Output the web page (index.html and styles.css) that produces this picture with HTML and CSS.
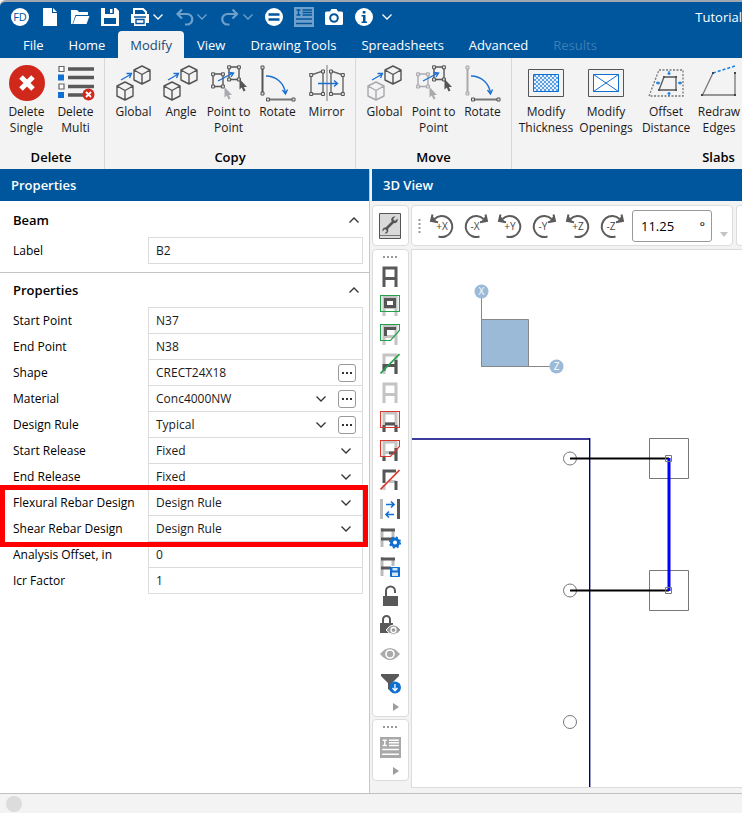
FILE: index.html
```html
<!DOCTYPE html>
<html lang="en">
<head>
<meta charset="utf-8">
<title>Tutorial</title>
<link rel="stylesheet" href="styles.css">
</head>
<body>
<svg class="defs" width="0" height="0" aria-hidden="true">
  <defs>
    <symbol id="chev" viewBox="0 0 12 12"><path d="M1.500 3.500 6 8l4.500-4.500" fill="none" stroke="currentColor" stroke-width="1.300"/></symbol>
    <symbol id="cube" viewBox="0 0 18 20"><path d="M9 1 1 5v10l8 4 8-4V5zM1 5l8 4.500L17 5M9 9.500V19" fill="none" stroke="currentColor" stroke-width="1.400" stroke-linejoin="round"/></symbol>
    <symbol id="arrow" viewBox="0 0 13 9"><path d="M1 8 10.500 2.500M6.500 1.500h5l-2 4.500" fill="none" stroke="#1a6fd0" stroke-width="1.300"/></symbol>
    <symbol id="quad" viewBox="0 0 14 17"><path d="M2 2h10v12.500H2z" fill="none" stroke="currentColor" stroke-width="1.400"/><path d="M.6.8h3v3h-3zM10.400.8h3v3h-3zM.6 13h3v3h-3zM10.400 13h3v3h-3z" fill="#ddd" stroke="currentColor"/></symbol>
    <symbol id="cursor" viewBox="0 0 8 13"><path d="M.5 0v10.500l2.300-2 1.700 4 2-1-1.700-3.500H8z" fill="currentColor"/></symbol>
    <symbol id="rotate" viewBox="0 0 36 38">
      <path d="M6 11c10 0 18 7 19.500 17M22.500 25l3 4 2-4.500" fill="none" stroke="#1a6fd0" stroke-width="1.400"/>
      <path d="M8.500 34.500h25" stroke="#777" stroke-width="2"/><path d="M6.500 33h3v3h-3zM32 33h3v3h-3z" fill="#ddd" stroke="#555"/>
      <path d="M2.500 2v26" stroke="currentColor" stroke-width="2"/><path d="M1 1h3v3H1zM1 27h3v3H1z" fill="#ddd" stroke="currentColor"/>
    </symbol>
    <symbol id="spin" viewBox="0 0 26 26">
      <path d="M5.500 6A10.500 10.500 0 1 1 9.500 23.500" fill="none" stroke="#5c5c5c" stroke-width="2"/><path d="M3.500 1.500 2 8l7 1.300" fill="none" stroke="#5c5c5c" stroke-width="2"/><path d="M2.800 2 2 8l6 1z" fill="#5c5c5c"/>
    </symbol>
    <symbol id="frame" viewBox="0 0 20 22"><path d="M4 21V2h12v19M4 12.500h12" fill="none" stroke="currentColor" stroke-width="3"/></symbol>
    <symbol id="form" viewBox="0 0 20 20"><path d="M0 0h20v20H0z" fill="currentColor"/><path d="M2.500 3h4M2.500 8h4M4.500 3v5M8.500 3H18M8.500 5.500H18M8.500 8H18M2 12h16M2 16.500h16" stroke="var(--ink)" stroke-width="1.400"/></symbol>
  </defs>
</svg>

<header class="top">
  <div class="quick">
    <button class="q" aria-label="Application"><svg width="20" height="20"><circle cx="10" cy="10" r="9" fill="#fff"/><text x="10" y="14" text-anchor="middle" class="logo">FD</text></svg></button>
    <button class="q" aria-label="New"><svg width="20" height="20"><path d="M3 1h9v5h5v13H3zM13 1l4 4h-4z" fill="#fff"/></svg></button>
    <button class="q" aria-label="Open"><svg width="20" height="20"><path d="M1 17V3h6l2 2h9v3H5.500L2.500 17z" fill="#fff"/><path d="M6 9h13.500l-3 8H3z" fill="#fff"/></svg></button>
    <button class="q" aria-label="Save"><svg width="20" height="20"><path d="M1 1h15l3 3v15H1z" fill="#fff"/><path d="M5 1h9v6H5zM4 11h12v6H4z" fill="#00569d"/><path d="M10 2h2.500v4H10z" fill="#fff"/></svg></button>
    <button class="q near" aria-label="Print"><svg width="20" height="20"><path d="M4 8V2h9l3 3v3" fill="none" stroke="#fff" stroke-width="2"/><path d="M1 7h18v9h-3v3H4v-3H1z" fill="#fff"/><path d="M4 10h12M6 12.500h8v4H6z" stroke="#00569d" stroke-width="1.400" fill="none"/></svg></button>
    <button class="c" aria-label="Print options"><svg width="12" height="12"><use href="#chev"/></svg></button>
    <button class="q dim near" aria-label="Undo"><svg width="20" height="20"><path d="M8 2.500 3.500 7 8 11.500M4 7h9a4.800 4.800 0 0 1 0 10.500h-2" fill="none" stroke="currentColor" stroke-width="2.200"/></svg></button>
    <button class="c dim wide" aria-label="Undo list"><svg width="12" height="12"><use href="#chev"/></svg></button>
    <button class="q dim near" aria-label="Redo"><svg width="20" height="20"><path d="M12.500 2.500 17 7 12.500 11.500M16.500 7h-9a4.800 4.800 0 0 0 0 10.500h2" fill="none" stroke="currentColor" stroke-width="2.200"/></svg></button>
    <button class="c dim" aria-label="Redo list"><svg width="12" height="12"><use href="#chev"/></svg></button>
    <button class="q" aria-label="Solve"><svg width="20" height="20"><circle cx="10" cy="10" r="9" fill="#fff"/><path d="M4.500 7.500h11M4.500 12.500h11" stroke="#00569d" stroke-width="2.400"/></svg></button>
    <button class="q dim" aria-label="Tables"><svg width="20" height="20"><use href="#form"/></svg></button>
    <button class="q" aria-label="Screenshot"><svg width="20" height="20"><path d="M1 6q0-1.500 1.500-1.500H6L7.500 2h5L14 4.500h3.500Q19 4.500 19 6v10.500q0 1.500-1.500 1.500h-15Q1 18 1 16.500z" fill="#fff"/><circle cx="10" cy="11" r="3.800" fill="none" stroke="#00569d" stroke-width="2"/></svg></button>
    <button class="q info" aria-label="Information"><svg width="20" height="20"><circle cx="10" cy="10" r="9" fill="#fff"/><path d="M8.700 4h2.800v2.500H8.700zM7.500 8h4v6.500H13V16H7.500v-1.500H9v-5H7.500z" fill="#00569d"/></svg></button>
    <button class="c" aria-label="Customize"><svg width="12" height="12"><use href="#chev"/></svg></button>
    <span class="doc">Tutorial</span>
  </div>
  <nav class="tabs">
    <a href="#">File</a><a href="#">Home</a><a href="#" class="on" aria-current="page">Modify</a><a href="#">View</a><a href="#">Drawing Tools</a><a href="#">Spreadsheets</a><a href="#">Advanced</a><a href="#" class="off">Results</a>
  </nav>
</header>

<section class="ribbon" aria-label="Modify tools">
  <div class="group">
    <div class="tools">
      <button class="tool m"><svg width="36" height="38"><circle cx="18" cy="18" r="18" fill="#d1281c"/><path d="m12 12 12 12M24 12 12 24" stroke="#fff" stroke-width="5"/></svg>Delete<br>Single</button>
      <button class="tool m"><svg width="38" height="38"><path d="M11 4h26M11 12.500h26M11 21.500h26M11 30h18" stroke="#595959" stroke-width="3.500"/><path d="M2 1.500h5v5H2zM2 19h5v5H2z" fill="#fff" stroke="#666" stroke-width="1.200"/><path d="M1 9.500h6v6H1zM1 27h6v6H1z" fill="#0f6fd0"/><circle cx="31.500" cy="29.500" r="6" fill="#d1281c"/><path d="m29 27 5 5M34 27l-5 5" stroke="#fff" stroke-width="1.800"/></svg>Delete<br>Multi</button>
    </div>
    <h2>Delete</h2>
  </div>
  <div class="group">
    <div class="tools">
      <button class="tool m"><svg width="36" height="38"><use href="#cube" x="0" y="16" width="18" height="20"/><use href="#cube" x="17" y="0" width="18" height="20"/><use href="#arrow" x="4" y="7" width="13" height="9"/></svg>Global</button>
      <button class="tool s"><svg width="36" height="38"><use href="#cube" x="0" y="16" width="18" height="20"/><use href="#cube" x="17" y="0" width="18" height="20"/><use href="#arrow" x="4" y="7" width="13" height="9"/></svg>Angle</button>
      <button class="tool m"><svg width="36" height="38"><use href="#quad" x="0" y="7" width="14" height="17"/><use href="#quad" x="16" y="0" width="14" height="17"/><use href="#cursor" x="13" y="22" width="8" height="13" class="pale"/><use href="#cursor" x="28" y="14" width="8" height="13"/><path d="M7 16 22 8M17.500 7.500 22.500 8 20 12" fill="none" stroke="#1a6fd0" stroke-width="1.400"/></svg>Point to<br>Point</button>
      <button class="tool m"><svg width="36" height="38"><use href="#rotate"/></svg>Rotate</button>
      <button class="tool m"><svg width="36" height="38"><path d="M18 0v36" stroke="#b5b5ba" stroke-width="2"/><path d="M2 10 14 6v23H2zM34 10 22 6v23h12z" fill="none" stroke="#666" stroke-width="1.400"/><path d="M.7 8.500h3v3h-3zM12.500 5h3v3h-3zM.7 27.500h3v3h-3zM12.500 27.500h3v3h-3zM32.300 8.500h3v3h-3zM20.500 5h3v3h-3zM20.500 27.500h3v3h-3zM32.300 27.500h3v3h-3z" fill="#ddd" stroke="#555"/><path d="M9 18.500h19M25 15.500l3.500 3-3.500 3" fill="none" stroke="#1a6fd0" stroke-width="1.400"/></svg>Mirror</button>
    </div>
    <h2>Copy</h2>
  </div>
  <div class="group">
    <div class="tools">
      <button class="tool m"><svg width="36" height="38"><use href="#cube" x="0" y="16" width="18" height="20" class="pale"/><use href="#cube" x="17" y="0" width="18" height="20"/><use href="#arrow" x="4" y="7" width="13" height="9"/></svg>Global</button>
      <button class="tool m"><svg width="36" height="38"><use href="#quad" x="0" y="7" width="14" height="17" class="pale"/><use href="#quad" x="16" y="0" width="14" height="17"/><use href="#cursor" x="13" y="22" width="8" height="13" class="pale"/><use href="#cursor" x="28" y="14" width="8" height="13"/><path d="M7 16 22 8M17.500 7.500 22.500 8 20 12" fill="none" stroke="#1a6fd0" stroke-width="1.400"/></svg>Point to<br>Point</button>
      <button class="tool m"><svg width="36" height="38" class="pale"><use href="#rotate"/></svg>Rotate</button>
    </div>
    <h2>Move</h2>
  </div>
  <div class="group slabs">
    <div class="tools">
      <button class="tool l"><svg width="36" height="38"><defs><pattern id="chk" width="4" height="4" patternUnits="userSpaceOnUse"><path d="M0 0h4v4H0z" fill="#e6f0fb"/><path d="M0 0h2v2H0zM2 2h2v2H2z" fill="#5ba0e4"/></pattern></defs><path d="M.5 4.500h35v27H.5z" fill="none" stroke="#555"/><path d="M5.500 9.500h25v17h-25z" fill="url(#chk)" stroke="#0f6fd0"/></svg>Modify<br>Thickness</button>
      <button class="tool l"><svg width="36" height="38"><path d="M.5 4.500h35v27H.5z" fill="none" stroke="#555"/><path d="M5.500 9.500h25v17h-25zl25 17M30.500 9.500l-25 17" fill="#fff" stroke="#0f6fd0"/></svg>Modify<br>Openings</button>
      <button class="tool l"><svg width="36" height="38"><path d="M11 5h24v26H1z" fill="none" stroke="#777" stroke-width="1.300" stroke-dasharray="2 1.500"/><path d="M16 12h12v13H11z" fill="none" stroke="#555" stroke-width="1.300"/><path d="M15 11h2v2h-2zM27 11h2v2h-2zM10 24h2v2h-2zM27 24h2v2h-2z" fill="#555"/><path d="M21 6v4M21 27v4M8 18h4M30 18h4M19.500 8.500h3M19.500 28.500h3M10 16.500v3M32 16.500v3" stroke="#1a7fe0" stroke-width="1.300"/></svg>Offset<br>Distance</button>
      <button class="tool s"><svg width="36" height="38"><path d="M12 8 1.500 30H34V8" fill="none" stroke="#777" stroke-width="1.300"/><path d="M12 8 34 1" stroke="#1a7fe0" stroke-width="1.500" stroke-dasharray="3 2"/><path d="M11 7h2v2h-2zM0 29h2v2H0zM33 29h2v2h-2zM33 7h2v2h-2z" fill="#444"/></svg>Redraw<br>Edges</button>
    </div>
    <h2>Slabs</h2>
  </div>
</section>

<main class="work">
  <aside class="props">
    <h2 class="bar">Properties</h2>
    <div class="blocks">
    <section class="block">
      <h3>Beam<button class="fold" aria-label="Collapse Beam"><svg width="12" height="12"><use href="#chev"/></svg></button></h3>
      <div class="row"><label for="lb">Label</label><div class="cell"><input id="lb" value="B2"></div></div>
    </section>
    <section class="block">
      <h3>Properties<button class="fold" aria-label="Collapse Properties"><svg width="12" height="12"><use href="#chev"/></svg></button></h3>
      <div class="row"><label for="sp">Start Point</label><div class="cell"><input id="sp" value="N37"></div></div>
      <div class="row"><label for="ep">End Point</label><div class="cell"><input id="ep" value="N38"></div></div>
      <div class="row"><label for="sh">Shape</label><div class="cell"><input id="sh" value="CRECT24X18"><button class="more" aria-label="Browse shapes"><i></i><i></i><i></i></button></div></div>
      <div class="row"><label for="ma">Material</label><div class="cell"><select id="ma"><option>Conc4000NW</option></select><svg class="drop" width="12" height="12"><use href="#chev"/></svg><button class="more" aria-label="Browse materials"><i></i><i></i><i></i></button></div></div>
      <div class="row"><label for="dr">Design Rule</label><div class="cell"><select id="dr"><option>Typical</option></select><svg class="drop" width="12" height="12"><use href="#chev"/></svg><button class="more" aria-label="Browse design rules"><i></i><i></i><i></i></button></div></div>
      <div class="row"><label for="sr">Start Release</label><div class="cell"><select id="sr"><option>Fixed</option></select><svg class="drop" width="12" height="12"><use href="#chev"/></svg></div></div>
      <div class="row"><label for="er">End Release</label><div class="cell"><select id="er"><option>Fixed</option></select><svg class="drop" width="12" height="12"><use href="#chev"/></svg></div></div>
      <div class="marked">
        <div class="row"><label for="fr">Flexural Rebar Design</label><div class="cell"><select id="fr"><option>Design Rule</option></select><svg class="drop" width="12" height="12"><use href="#chev"/></svg></div></div>
        <div class="row"><label for="sd">Shear Rebar Design</label><div class="cell"><select id="sd"><option>Design Rule</option></select><svg class="drop" width="12" height="12"><use href="#chev"/></svg></div></div>
      </div>
      <div class="row"><label for="ao">Analysis Offset, in</label><div class="cell"><input id="ao" value="0"></div></div>
      <div class="row"><label for="ic">Icr Factor</label><div class="cell"><input id="ic" value="1"></div></div>
    </section>
    </div>
  </aside>

  <section class="view">
    <h2 class="bar">3D View</h2>
    <div class="stage">
      <button class="box wrench" aria-label="View settings"><svg width="23" height="28"><path d="M.5 1.500h21v25H.5z" fill="#d9d9d9" stroke="#555"/><path d="M1 23.500h20" stroke="#777"/><path d="m7 17 8-8" stroke="#555" stroke-width="2.500"/><path d="M18.500 6.500 16 9l-2-2 2.500-2.500c-3-.5-5 2-4 4.500l2 2c3 .8 4.800-1.500 4-4.500zM3.500 19.500 6 17l2 2-2.500 2.500c3 .5 4.500-2 3.500-4.500l-2-1.500c-2.500-.5-4 1.500-3.500 4z" fill="#555"/></svg></button>
      <div class="strip">
        <div class="box turns">
          <svg class="grip" width="3" height="14"><path d="M1.500 0v14" stroke="#999" stroke-width="2" stroke-dasharray="2"/></svg>
          <button class="turn" aria-label="Rotate +X"><svg width="26" height="26"><use href="#spin"/><text x="13" y="17">+X</text></svg></button>
          <button class="turn" aria-label="Rotate -X"><svg width="26" height="26"><use href="#spin" transform="matrix(-1 0 0 1 26 0)"/><text x="12" y="17">-X</text></svg></button>
          <button class="turn" aria-label="Rotate +Y"><svg width="26" height="26"><use href="#spin"/><text x="13" y="17">+Y</text></svg></button>
          <button class="turn" aria-label="Rotate -Y"><svg width="26" height="26"><use href="#spin" transform="matrix(-1 0 0 1 26 0)"/><text x="12" y="17">-Y</text></svg></button>
          <button class="turn" aria-label="Rotate +Z"><svg width="26" height="26"><use href="#spin"/><text x="13" y="17">+Z</text></svg></button>
          <button class="turn" aria-label="Rotate -Z"><svg width="26" height="26"><use href="#spin" transform="matrix(-1 0 0 1 26 0)"/><text x="12" y="17">-Z</text></svg></button>
          <label class="angle"><input value="11.25" aria-label="Rotation angle">°</label>
          <svg class="tail" width="8" height="5"><path d="M0 0h8L4 5z" fill="#c4c4c8"/></svg>
        </div>
        <div class="box next"></div>
      </div>
      <div class="side">
        <div class="box tray">
          <svg class="dots" width="14" height="2"><path d="M0 1h14" stroke="#999" stroke-width="2" stroke-dasharray="2"/></svg>
          <button aria-label="Show all"><svg width="20" height="22"><use href="#frame"/></svg></button>
          <button aria-label="Show inside box"><svg width="20" height="22"><use href="#frame" class="faint"/><path d="M5.500 4.500h9v7h-9z" fill="none" stroke="#555" stroke-width="3"/><path d="M.5.500h19v16H.5z" fill="none" stroke="#22a04a" stroke-width="1.200"/></svg></button>
          <button aria-label="Show inside polygon"><svg width="20" height="22"><use href="#frame" class="faint"/><path d="M5.500 12V4.500H16" fill="none" stroke="#555" stroke-width="3"/><path d="M.5.500h19v6l-9 10H.5z" fill="none" stroke="#22a04a" stroke-width="1.200"/></svg></button>
          <button aria-label="Show by line"><svg width="20" height="22"><use href="#frame" class="faint"/><path d="M4 18v-5.500h12V21M16 12V7" fill="none" stroke="#555" stroke-width="3"/><path d="M.5 20.500 19.500 1" stroke="#22a04a" stroke-width="1.600"/></svg></button>
          <button aria-label="Hide all"><svg width="20" height="22"><use href="#frame" class="faint"/></svg></button>
          <button aria-label="Hide inside box"><svg width="20" height="22"><use href="#frame" class="faint"/><path d="M4 14v7M16 14v7M5 13h10" fill="none" stroke="#555" stroke-width="3"/><path d="M.5.500h19v16H.5z" fill="none" stroke="#d8392c" stroke-width="1.200"/></svg></button>
          <button aria-label="Hide inside polygon"><svg width="20" height="22"><use href="#frame" class="faint"/><path d="M4 17v4M16 8v13M9 13h7" fill="none" stroke="#555" stroke-width="3"/><path d="M.5.500h19v6l-9 10H.5z" fill="none" stroke="#d8392c" stroke-width="1.200"/></svg></button>
          <button aria-label="Hide by line"><svg width="20" height="22"><path d="M4 21v-5M9 12.500h7" stroke="#c4c4c4" stroke-width="3"/><path d="M4 14V2h12M16 12v9" fill="none" stroke="#555" stroke-width="3"/><path d="M.5 20.500 19.500 1" stroke="#d8392c" stroke-width="1.600"/></svg></button>
          <button aria-label="Swap range"><svg width="20" height="22"><path d="M1.500 1v20" stroke="#bbb" stroke-width="3"/><path d="M18.500 1v20" stroke="#595959" stroke-width="3"/><path d="M6 6.500h8M11 3.500l3 3-3 3M14 16.500H6M9 13.500l-3 3 3 3" fill="none" stroke="#0f6fd0" stroke-width="1.600"/></svg></button>
          <button aria-label="View options"><svg width="22" height="22"><path d="M2 1v19M13 2v9" stroke="#bbb" stroke-width="3"/><path d="M1 3h14M1 12h12" stroke="#595959" stroke-width="3"/><circle cx="15" cy="15.500" r="3.500" fill="#fff" stroke="#0f6fd0" stroke-width="3"/><circle cx="15" cy="15.500" r="5.300" fill="none" stroke="#0f6fd0" stroke-width="1.600" stroke-dasharray="2 2.200"/></svg></button>
          <button aria-label="Save view"><svg width="22" height="22"><path d="M2 1v19M13 2v8" stroke="#bbb" stroke-width="3"/><path d="M1 3h14M1 12h10" stroke="#595959" stroke-width="3"/><path d="M10.500 11.500h9v9h-9z" fill="#0f6fd0" stroke="#0f6fd0"/><path d="M12.500 12h5v2.500h-5zM12 16.500h6V20h-6z" fill="#d6e8fa"/></svg></button>
          <button aria-label="Unlock"><svg width="20" height="22"><path d="M3 11h15v10H3z" fill="#595959"/><path d="M6 11V6a4.500 4.500 0 0 1 9 0v2" fill="none" stroke="#595959" stroke-width="2"/></svg></button>
          <button aria-label="Lock visibility"><svg width="22" height="22"><path d="M0 9h13v10H0z" fill="#595959"/><path d="M3 9V5.500a3.500 3.500 0 0 1 7 0V9" fill="none" stroke="#595959" stroke-width="2"/><path d="M6 16q7.500-10 15 0-7.500 9-15 0z" fill="#999" stroke="#fff"/><circle cx="13.500" cy="16" r="2.500" fill="#999" stroke="#fff" stroke-width="1.300"/></svg></button>
          <button aria-label="Visibility"><svg width="20" height="22"><path d="M0 11q10-12 20 0-10 12-20 0z" fill="#aaa"/><circle cx="10" cy="11" r="4" fill="#aaa" stroke="#fff" stroke-width="1.600"/></svg></button>
          <button aria-label="Filter"><svg width="22" height="22"><path d="M1 2h18v2l-7 7v9l-4-3v-6L1 4z" fill="#595959"/><circle cx="15" cy="15.500" r="6" fill="#0f6fd0"/><path d="M15 12v6.500M12.500 16l2.500 2.800 2.500-2.800" fill="none" stroke="#fff" stroke-width="1.300"/></svg></button>
          <svg class="play" width="6" height="8"><path d="M0 0v8l6-4z" fill="#9b9ba0"/></svg>
        </div>
        <div class="box tray">
          <svg class="dots" width="14" height="2"><path d="M0 1h14" stroke="#999" stroke-width="2" stroke-dasharray="2"/></svg>
          <button aria-label="Table"><svg width="21" height="21" class="grey" viewBox="0 0 20 20"><use href="#form"/></svg></button>
          <svg class="play" width="6" height="8"><path d="M0 0v8l6-4z" fill="#9b9ba0"/></svg>
        </div>
      </div>
      <div class="canvas">
        <svg width="100%" height="100%" role="img" aria-label="Model plan">
          <path d="M69.500 48v68.500H138" fill="none" stroke="#888"/>
          <path d="M69.500 69.500h47v47h-47z" fill="#9bbad8" stroke="#888"/>
          <circle cx="69.500" cy="41.500" r="7" fill="#9bbad8"/><text x="69.500" y="45">X</text>
          <circle cx="144.500" cy="116.500" r="7" fill="#9bbad8"/><text x="144.500" y="120">Z</text>
          <path d="M0 189h178" stroke="#3c3c9d" stroke-width="2"/><path d="M177.700 188v1200" stroke="#000080" stroke-width="1.400"/>
          <g fill="none" stroke="#777"><circle cx="158" cy="208.500" r="6.500"/><circle cx="158" cy="340.500" r="6.500"/><circle cx="158" cy="472" r="6.500"/><path d="M237.500 188.500h39v40h-39zM237.500 320.500h39v40h-39z"/></g>
          <path d="M158 208.500h99M158 340.500h99" stroke="#000" stroke-width="2"/>
          <path d="M257 208v133" stroke="#00f" stroke-width="3"/>
          <path d="M253.500 205.500h6v6h-6zM253.500 337.500h6v6h-6z" fill="none" stroke="#777"/>
        </svg>
      </div>
    </div>
  </section>
</main>
<footer class="status"><span class="lamp"></span></footer>
</body>
</html>
```
FILE: styles.css
```css
:root { --blue: #00569d; --line: #dcdcdc; --ink: #00569d; }
* { box-sizing: border-box; }
body {
  margin: 0; height: 100vh; overflow: hidden; display: flex; flex-direction: column;
  font: 12px/16px "Open Sans", "Noto Sans", sans-serif; color: #000; background: #f3f3f3;
}
button, input, select { font: inherit; color: inherit; border: 0; background: none; padding: 0; margin: 0; }
svg { display: block; flex: none; }
h2, h3 { margin: 0; font-weight: 600; }
.defs { position: absolute; }
.pale { color: #a9a9ae; }
.faint { color: #c4c4c4; }

.top { background: var(--blue); color: #fff; border-top: 2px solid #9fa8b0; border-top-left-radius: 6px; }
.quick { display: flex; align-items: center; height: 29px; padding-left: 10px; }
.q { width: 20px; margin-right: 10px; }
.c { width: 12px; margin-right: 10px; }
.near { margin-right: 2px; }
.wide { margin-right: 12px; }
.info { margin-right: 7px; }
.dim { color: #6fa0cb; }
.logo { font: 11px "Open Sans", sans-serif; fill: var(--blue); }
.doc { margin-left: auto; font-size: 13px; white-space: nowrap; }
.tabs { display: flex; gap: 1px; height: 27px; padding-left: 11px; }
.tabs a { color: #fff; text-decoration: none; font-size: 13px; line-height: 28px; padding: 0 12px; white-space: nowrap; }
.tabs .on { background: #f3f3f3; color: #1b4a73; border-radius: 4px 4px 0 0; }
.tabs .off { color: #3d7db5; }

.ribbon { display: flex; height: 111px; flex: none; overflow: hidden; }
.group { flex: none; display: flex; flex-direction: column; border-right: 1px solid #d8d8d8; padding: 7px 4px 0; }
.group:first-child { padding: 7px 4px 0 2px; }
.group.slabs { width: 414px; }
.tools { display: flex; flex: 1; align-items: flex-start; }
.tool { display: flex; flex-direction: column; align-items: center; text-align: center; color: #1a1a1a; line-height: 16px; white-space: nowrap; }
.tool svg { color: #555; margin-bottom: 1px; }
.tool svg.pale { color: #a9a9ae; }
.s { width: 46px; } .m { width: 49px; } .l { width: 60px; }
.group h2 { font-size: 13px; line-height: 24px; text-align: center; }

.work { flex: 1; display: flex; min-height: 0; }
.bar { background: var(--blue); color: #fff; font-size: 13px; line-height: 32px; padding-left: 11px; }
.props { flex: 0 0 370px; background: #fff; border-right: 1px solid #c8c8c8; }
.blocks { padding-top: 2px; }
.block { padding: 2px 6px 9px 13px; border-bottom: 1px solid #c4c4c4; }
.block:last-child { border: 0; }
.block h3 { display: flex; justify-content: space-between; align-items: center; font-size: 13px; line-height: 30px; margin-bottom: 2px; }
.fold { color: #333; padding-right: 3px; }
.fold svg { transform: rotate(180deg); }
.row { display: grid; grid-template-columns: 135px 1fr; height: 26px; }
.row label { line-height: 27px; }
.cell { display: flex; align-items: center; height: 27px; border: 1px solid var(--line); padding: 0 6px 0 7px; background: #fff; }
.cell input, .cell select { flex: 1; min-width: 0; height: 25px; appearance: none; color: #1a1a1a; }
.drop { color: #333; margin: 0 4px; pointer-events: none; }
.more { display: flex; align-items: center; justify-content: center; gap: 2px; width: 18px; height: 18px; margin-left: 7px; border: 1px solid #999; border-radius: 3px; }
.more i { width: 2px; height: 2px; background: #333; }
.marked { position: relative; }
.marked::after { content: ""; position: absolute; inset: -4px -5px -6px -13px; border: 5px solid #f00; pointer-events: none; }

.view { flex: 1; min-width: 0; display: flex; flex-direction: column; padding-left: 2px; }
.stage { flex: 1; min-height: 0; display: grid; grid-template: 41px 1fr / 37px 1fr; gap: 3px 2px; padding: 4px 0 5px; overflow: hidden; }
.box { background: #fff; border: 1px solid var(--line); border-radius: 4px; }
.wrench { display: flex; align-items: center; justify-content: center; }
.strip { display: flex; gap: 3px; min-width: 0; overflow: hidden; }
.turns { flex: none; display: flex; align-items: center; padding: 0 4px 0 6px; }
.grip { margin-right: 8px; }
.turn { width: 26px; margin-right: 8px; }
.turn:nth-last-of-type(1) { margin-right: 7px; }
.turn text { font: 10px "Open Sans", sans-serif; fill: #444; text-anchor: middle; }
.angle { display: flex; align-items: center; width: 80px; height: 32px; padding: 0 6px 0 8px; border: 1px solid #999; border-radius: 3px; font-size: 13px; }
.angle input { flex: 1; min-width: 0; }
.tail { align-self: flex-end; margin: 0 0 8px 8px; }
.next { flex: 1; border-right: 0; border-radius: 4px 0 0 4px; }
.side { display: flex; flex-direction: column; gap: 2px; }
.tray { display: flex; flex-direction: column; align-items: center; padding: 0 1px 5px 0; color: #595959; }
.dots { margin: 6px 0 8px; }
.tray button { height: 22px; width: 20px; margin-bottom: 7px; color: #595959; }
.tray .grey { color: #a9a9a9; --ink: #fff; }
.play { align-self: flex-end; margin: 2px 8px 0 0; }
.canvas { background: #fff; border: 1px solid var(--line); border-right: 0; min-width: 0; min-height: 0; overflow: hidden; }
.canvas text { font: 10px "Open Sans", sans-serif; fill: #fff; text-anchor: middle; }
.status { flex: none; height: 20px; border-top: 1px solid #c0c0c0; padding: 2px 6px; }
.lamp { display: block; width: 16px; height: 16px; border-radius: 50%; background: #dcdcdc; }
```
